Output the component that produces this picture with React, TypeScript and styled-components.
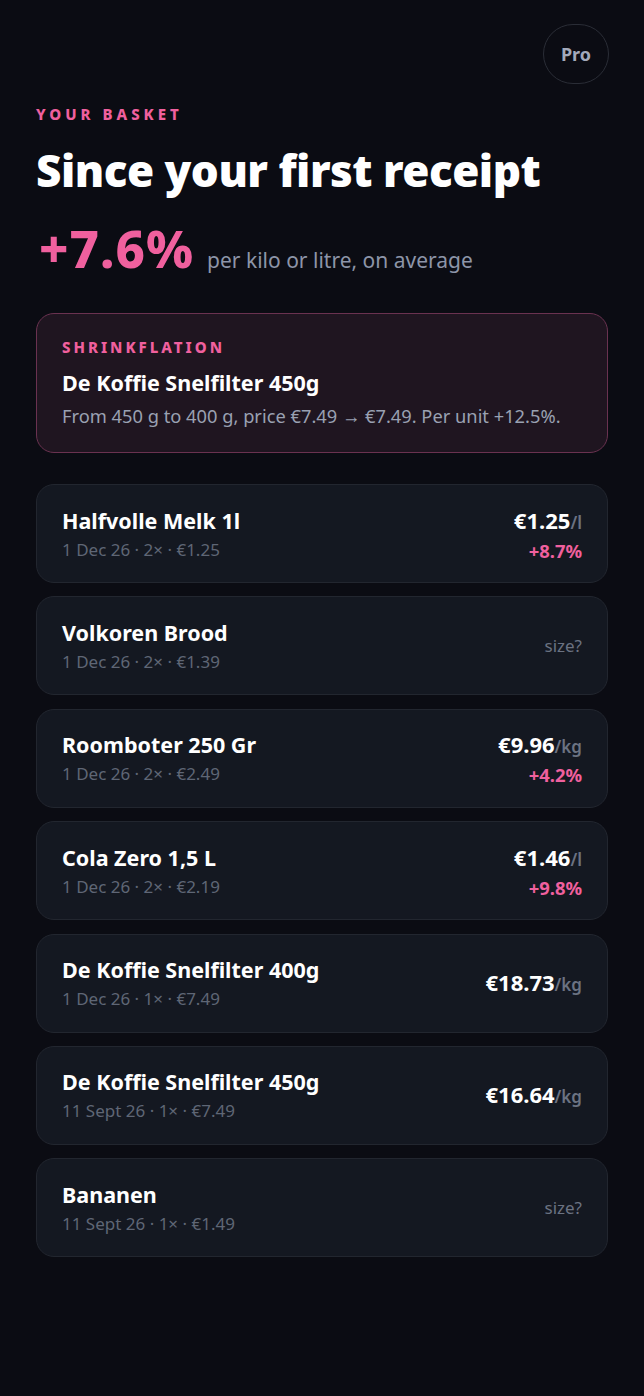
import React from "react";
import styled, { createGlobalStyle } from "styled-components";

const Global = createGlobalStyle`
  html, body { margin: 0; padding: 0; background: #0b0c13; }
  body { font-family: "Noto Sans", "Open Sans", sans-serif; color: #fff; }
  * { box-sizing: border-box; }
`;

const Page = styled.div`
  min-height: 1396px;
  background: #0b0c13;
  padding: 24px 36px 40px 36px;
  display: flex;
  flex-direction: column;
`;

const TopBar = styled.div`
  display: flex;
  justify-content: flex-end;
`;

const ProButton = styled.button`
  width: 66px;
  height: 60px;
  border-radius: 999px;
  border: 1.5px solid #2a2d36;
  background: transparent;
  color: #a3aabb;
  font-family: inherit;
  font-weight: 700;
  font-size: 18px;
  margin-right: -1px;
  padding: 0;
`;

const Eyebrow = styled.div`
  margin-top: 20px;
  color: #f0609e;
  font-size: 15px;
  line-height: 20px;
  font-weight: 800;
  letter-spacing: 4px;
  text-transform: uppercase;
`;

const Heading = styled.h1`
  margin: 20px 0 0 0;
  font-size: 44px;
  line-height: 52px;
  font-weight: 900;
  letter-spacing: -0.5px;
  color: #fff;
`;

const StatRow = styled.div`
  margin-top: 22px;
  display: flex;
  align-items: baseline;
  gap: 13px;
  height: 60px;
`;

const BigStat = styled.span`
  color: #f0609e;
  font-size: 51px;
  line-height: 60px;
  font-weight: 800;
  letter-spacing: 1px;
  padding-left: 3px;
`;

const StatNote = styled.span`
  color: #8d95a8;
  font-size: 21px;
`;

const ShrinkCard = styled.div`
  margin-top: 35px;
  border: 1.5px solid #6a3250;
  background: #1f1520;
  border-radius: 18px;
  padding: 23px 25px;
`;

const ShrinkLabel = styled.div`
  color: #f0609e;
  font-size: 15px;
  line-height: 20px;
  font-weight: 800;
  letter-spacing: 3px;
`;

const ShrinkTitle = styled.div`
  margin-top: 12px;
  font-size: 21.5px;
  line-height: 28px;
  font-weight: 700;
  color: #fff;
`;

const ShrinkDesc = styled.div`
  margin-top: 6px;
  font-size: 18.3px;
  line-height: 26px;
  color: #9aa1b2;
`;

const List = styled.div`
  margin-top: 31px;
  display: flex;
  flex-direction: column;
  gap: 13.4px;
`;

const Item = styled.div`
  height: 99px;
  border: 1.5px solid #22262f;
  background: #141821;
  border-radius: 18px;
  padding: 0 25px;
  display: flex;
  align-items: center;
  justify-content: space-between;
`;

const ItemMain = styled.div`
  display: flex;
  flex-direction: column;
`;

const ItemTitle = styled.div`
  font-size: 21.5px;
  line-height: 28px;
  font-weight: 700;
  color: #fff;
`;

const ItemSub = styled.div`
  margin-top: 4px;
  font-size: 17px;
  line-height: 22px;
  color: #5f6675;
`;

const ItemSide = styled.div`
  display: flex;
  flex-direction: column;
  align-items: flex-end;
`;

const Price = styled.div`
  font-size: 22px;
  line-height: 28px;
  font-weight: 700;
  color: #fff;
`;

const Unit = styled.span`
  font-size: 17px;
  font-weight: 600;
  color: #6b7282;
`;

const Change = styled.div`
  margin-top: 3px;
  font-size: 18.4px;
  line-height: 22px;
  font-weight: 700;
  color: #f0609e;
`;

const SizeHint = styled.div`
  font-size: 17px;
  color: #6b7282;
`;

type Row = {
  name: string;
  sub: string;
  price?: string;
  unit?: string;
  change?: string;
};

const rows: Row[] = [
  { name: "Halfvolle Melk 1l", sub: "1 Dec 26 · 2× · €1.25", price: "€1.25", unit: "/l", change: "+8.7%" },
  { name: "Volkoren Brood", sub: "1 Dec 26 · 2× · €1.39" },
  { name: "Roomboter 250 Gr", sub: "1 Dec 26 · 2× · €2.49", price: "€9.96", unit: "/kg", change: "+4.2%" },
  { name: "Cola Zero 1,5 L", sub: "1 Dec 26 · 2× · €2.19", price: "€1.46", unit: "/l", change: "+9.8%" },
  { name: "De Koffie Snelfilter 400g", sub: "1 Dec 26 · 1× · €7.49", price: "€18.73", unit: "/kg" },
  { name: "De Koffie Snelfilter 450g", sub: "11 Sept 26 · 1× · €7.49", price: "€16.64", unit: "/kg" },
  { name: "Bananen", sub: "11 Sept 26 · 1× · €1.49" },
];

export default function App() {
  return (
    <>
      <Global />
      <Page>
        <TopBar>
          <ProButton>Pro</ProButton>
        </TopBar>
        <Eyebrow>Your basket</Eyebrow>
        <Heading>Since your first receipt</Heading>
        <StatRow>
          <BigStat>+7.6%</BigStat>
          <StatNote>per kilo or litre, on average</StatNote>
        </StatRow>
        <ShrinkCard>
          <ShrinkLabel>SHRINKFLATION</ShrinkLabel>
          <ShrinkTitle>De Koffie Snelfilter 450g</ShrinkTitle>
          <ShrinkDesc>From 450 g to 400 g, price €7.49 → €7.49. Per unit +12.5%.</ShrinkDesc>
        </ShrinkCard>
        <List>
          {rows.map((r) => (
            <Item key={r.name}>
              <ItemMain>
                <ItemTitle>{r.name}</ItemTitle>
                <ItemSub>{r.sub}</ItemSub>
              </ItemMain>
              <ItemSide>
                {r.price ? (
                  <>
                    <Price>
                      {r.price}
                      <Unit>{r.unit}</Unit>
                    </Price>
                    {r.change && <Change>{r.change}</Change>}
                  </>
                ) : (
                  <SizeHint>size?</SizeHint>
                )}
              </ItemSide>
            </Item>
          ))}
        </List>
      </Page>
    </>
  );
}
